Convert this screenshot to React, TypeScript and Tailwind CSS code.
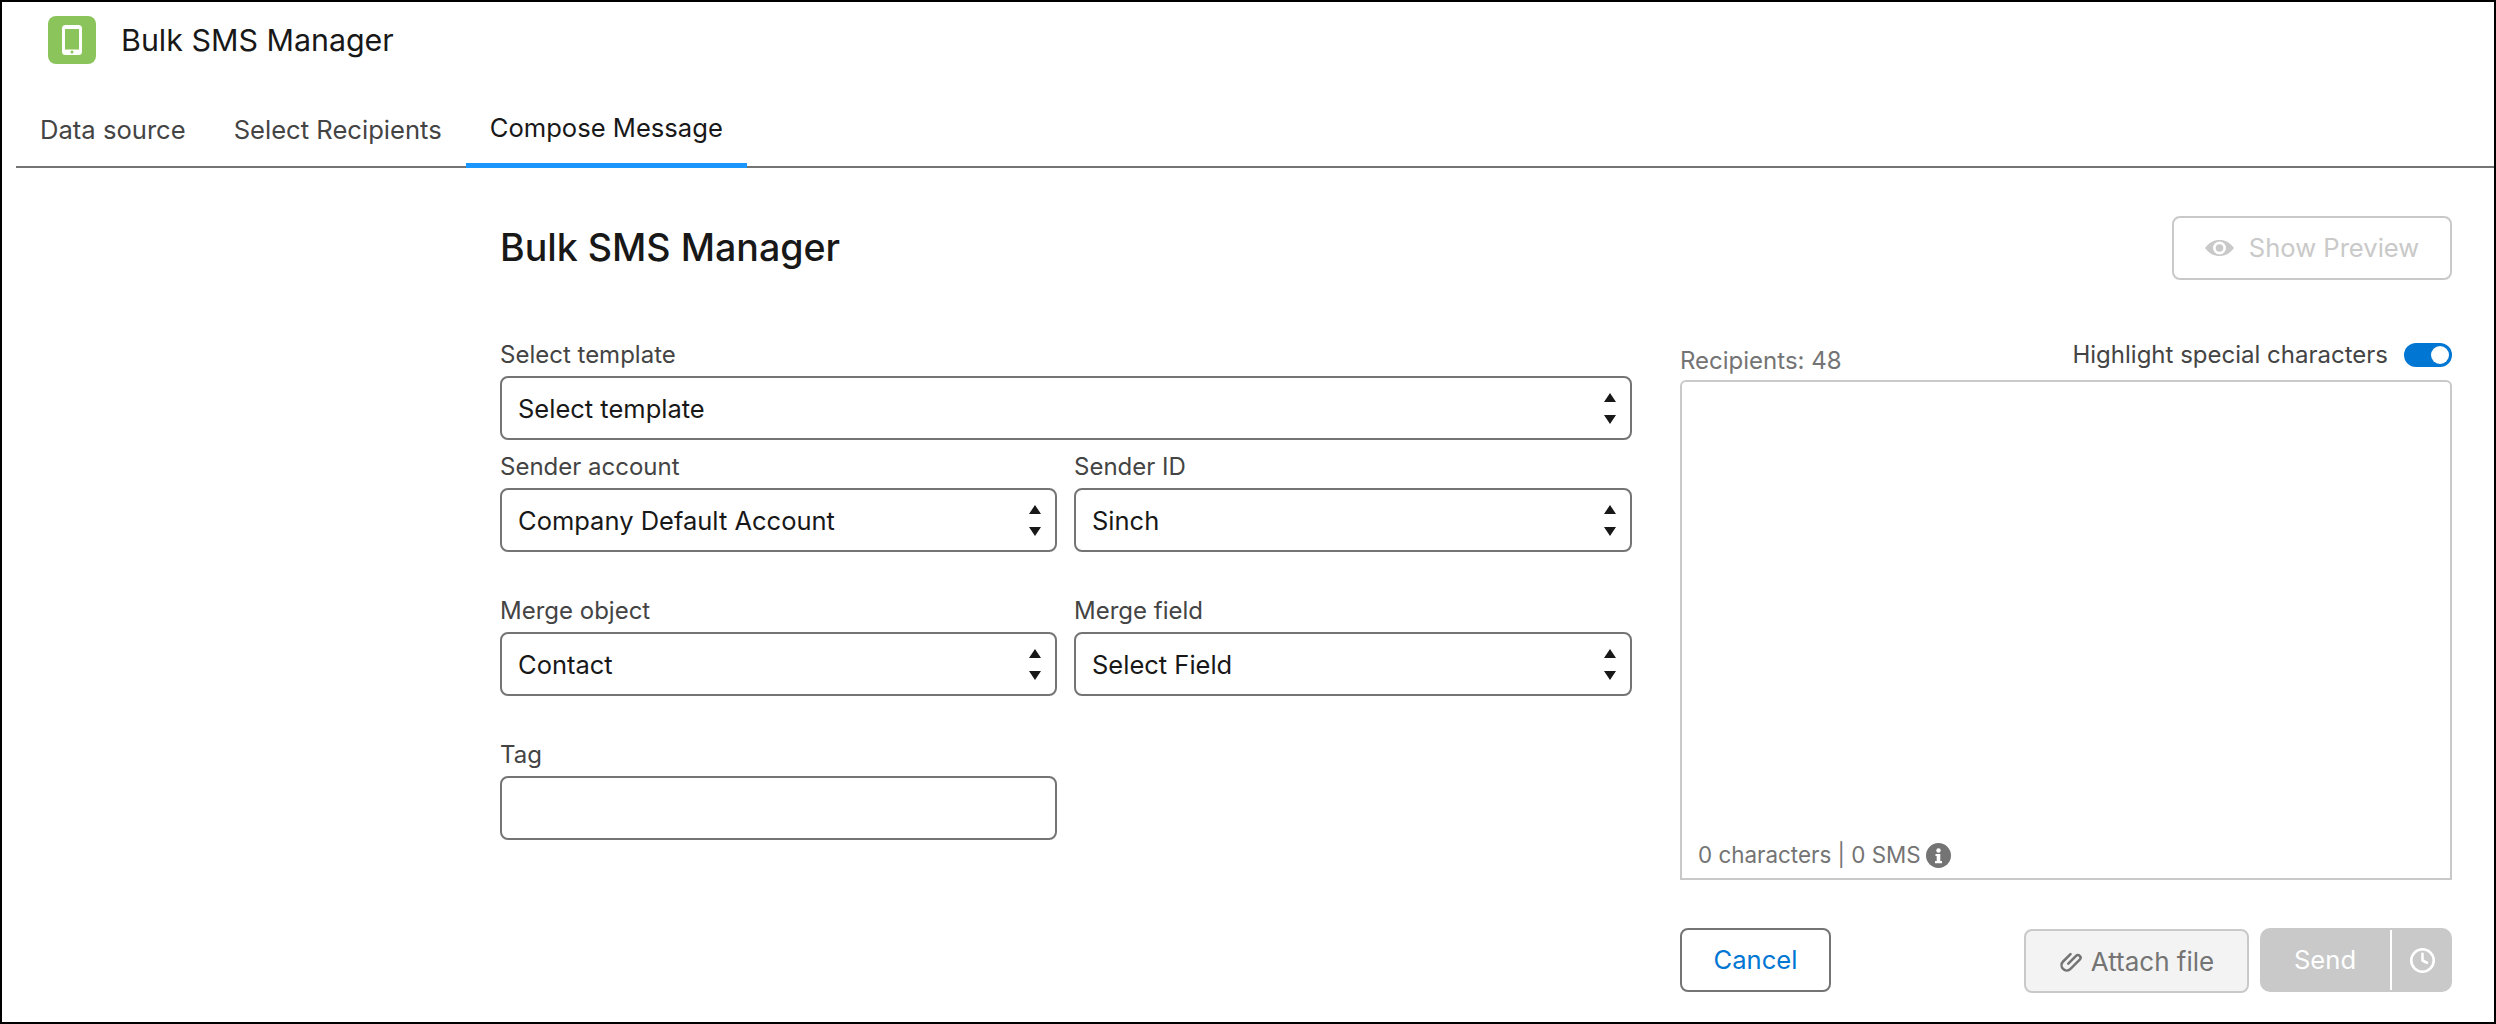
import { Clock } from "lucide-react";

function Chevrons() {
  return (
    <svg width="12" height="31" viewBox="0 0 12 31" className="shrink-0" aria-hidden="true">
      <path d="M6 0 L12 9 H0 Z" fill="#181818" />
      <path d="M0 22 H12 L6 31 Z" fill="#181818" />
    </svg>
  );
}

function Label({ children }: { children: React.ReactNode }) {
  return <div className="h-[28px] mb-[7px] text-[24px] leading-[28px] text-[#444444]">{children}</div>;
}

function SelectBox({ value }: { value: string }) {
  return (
    <div className="h-[64px] flex items-center justify-between pl-[16px] pr-[14px] rounded-[8px] border-2 border-[#747474] text-[25.500px] text-[#181818]">
      <span className="pt-[2px]">{value}</span>
      <Chevrons />
    </div>
  );
}

function Field({ label, value }: { label: string; value: string }) {
  return (
    <div>
      <Label>{label}</Label>
      <SelectBox value={value} />
    </div>
  );
}

export default function App() {
  return (
    <div className="w-[2496px] h-[1024px] flex flex-col overflow-hidden bg-white border-2 border-black font-['Inter','Liberation_Sans',sans-serif]">
      <div className="flex items-center pt-[14px] pl-[46px]">
        <div className="w-[48px] h-[48px] rounded-[8px] bg-[#8bc45a] flex items-center justify-center">
          <svg width="20" height="30" viewBox="0 0 20 30" aria-hidden="true">
            <rect x="0" y="0" width="20" height="30" rx="3.500" fill="#ffffff" />
            <rect x="3" y="4" width="14" height="20.500" fill="#8bc45a" />
            <circle cx="10" cy="27" r="1.500" fill="#8bc45a" />
          </svg>
        </div>
        <div className="ml-[25px] pt-[2px] text-[30.400px] text-[#181818]">Bulk SMS Manager</div>
      </div>

      <div className="mt-[28px] ml-[14px] flex h-[76px] border-b-2 border-[#747474] text-[25.600px]">
        <div className="px-[24px] pt-[2px] flex items-center text-[#444444]">Data source</div>
        <div className="px-[24px] pt-[2px] flex items-center text-[#444444]">Select Recipients</div>
        <div className="px-[24px] pt-[2px] flex items-center h-[76px] border-b-[5px] border-[#1b96ff] text-[#181818]">Compose Message</div>
      </div>

      <div className="flex-1 pl-[498px] pr-[42px]">
        <div className="mt-[48px] flex items-center justify-between">
          <h1 className="text-[37.600px] font-medium text-[#181818]">Bulk SMS Manager</h1>
          <div className="w-[280px] h-[64px] flex items-center justify-center gap-[15px] rounded-[8px] border-2 border-[#c9c9c9] text-[25.600px] text-[#c9c9c9]">
            <svg width="29" height="16" viewBox="0 0 29 16" aria-hidden="true">
              <path
                fillRule="evenodd"
                d="M0 8C5 1.500 10 0 14.500 0S24 1.500 29 8c-5 6.500-10 8-14.500 8S5 14.500 0 8Zm14.500-6.500a6.500 6.500 0 1 0 0 13 6.500 6.500 0 0 0 0-13Zm0 2.700a3.800 3.800 0 1 1 0 7.600 3.800 3.800 0 0 1 0-7.600Z"
                fill="#c9c9c9"
              />
            </svg>
            <span>Show Preview</span>
          </div>
        </div>

        <div className="mt-[61px] flex gap-[48px]">
          <div className="w-[1132px] flex flex-col">
            <Field label="Select template" value="Select template" />
            <div className="mt-[13px] grid grid-cols-[557px_558px] gap-x-[17px]">
              <Field label="Sender account" value="Company Default Account" />
              <Field label="Sender ID" value="Sinch" />
            </div>
            <div className="mt-[45px] grid grid-cols-[557px_558px] gap-x-[17px]">
              <Field label="Merge object" value="Contact" />
              <Field label="Merge field" value="Select Field" />
            </div>
            <div className="mt-[45px] grid grid-cols-[557px_558px] gap-x-[17px]">
              <div>
                <Label>Tag</Label>
                <div className="h-[64px] rounded-[8px] border-2 border-[#747474]" />
              </div>
            </div>
          </div>

          <div className="w-[772px] flex flex-col">
            <div className="h-[39px] flex justify-between">
              <div className="self-end mb-[5px] text-[24px] leading-[28px] text-[#747474]">Recipients: 48</div>
              <div className="flex items-center h-[28px] gap-[16px] text-[24px] text-[#444444]">
                <span>Highlight special characters</span>
                <div className="w-[48px] h-[24px] rounded-full bg-[#0176d3] flex items-center justify-end pr-[3px]">
                  <div className="w-[18px] h-[18px] rounded-full bg-white" />
                </div>
              </div>
            </div>
            <div className="h-[500px] flex items-end rounded-t-[6px] border-2 border-[#c9c9c9] px-[16px] pb-[9px]">
              <div className="flex items-center h-[28px] gap-[5px] text-[22.400px] text-[#747474]">
                <span>0 characters | 0 SMS</span>
                <svg width="25" height="25" viewBox="0 0 25 25" aria-hidden="true">
                  <circle cx="12.500" cy="12.500" r="12.500" fill="#747474" />
                  <circle cx="12.500" cy="7.500" r="2.200" fill="#ffffff" />
                  <path d="M9.500 11h4.800v7h1.700v2.200H9v-2.200h1.700v-5H9.500z" fill="#ffffff" />
                </svg>
              </div>
            </div>
            <div className="mt-[48px] flex items-start">
              <div className="w-[151px] h-[64px] flex items-center justify-center rounded-[8px] border-2 border-[#747474] text-[25.600px] text-[#0176d3]">
                Cancel
              </div>
              <div className="ml-auto mt-[1px] w-[225px] h-[64px] flex items-center justify-center gap-[9px] rounded-[8px] border-2 border-[#c9c9c9] bg-[#f3f3f3] text-[26px] text-[#747474]">
                <svg width="23" height="23" viewBox="0 0 22 22" fill="none" stroke="#747474" strokeWidth="2.400" strokeLinecap="round" className="shrink-0" aria-hidden="true">
                  <path transform="rotate(45 11 11)" d="M6 6V16a5 5 0 0 0 10 0V3.500a2.500 2.500 0 0 0-5 0V14" />
                </svg>
                <span>Attach file</span>
              </div>
              <div className="ml-[11px] w-[192px] h-[64px] flex items-center rounded-[10px] bg-[#c9c9c9] text-[25.600px] text-white">
                <div className="w-[130px] text-center">Send</div>
                <div className="w-[2px] h-[60px] bg-white" />
                <div className="flex-1 flex items-center justify-center">
                  <Clock size={27} strokeWidth={2.300} />
                </div>
              </div>
            </div>
          </div>
        </div>
      </div>
    </div>
  );
}
